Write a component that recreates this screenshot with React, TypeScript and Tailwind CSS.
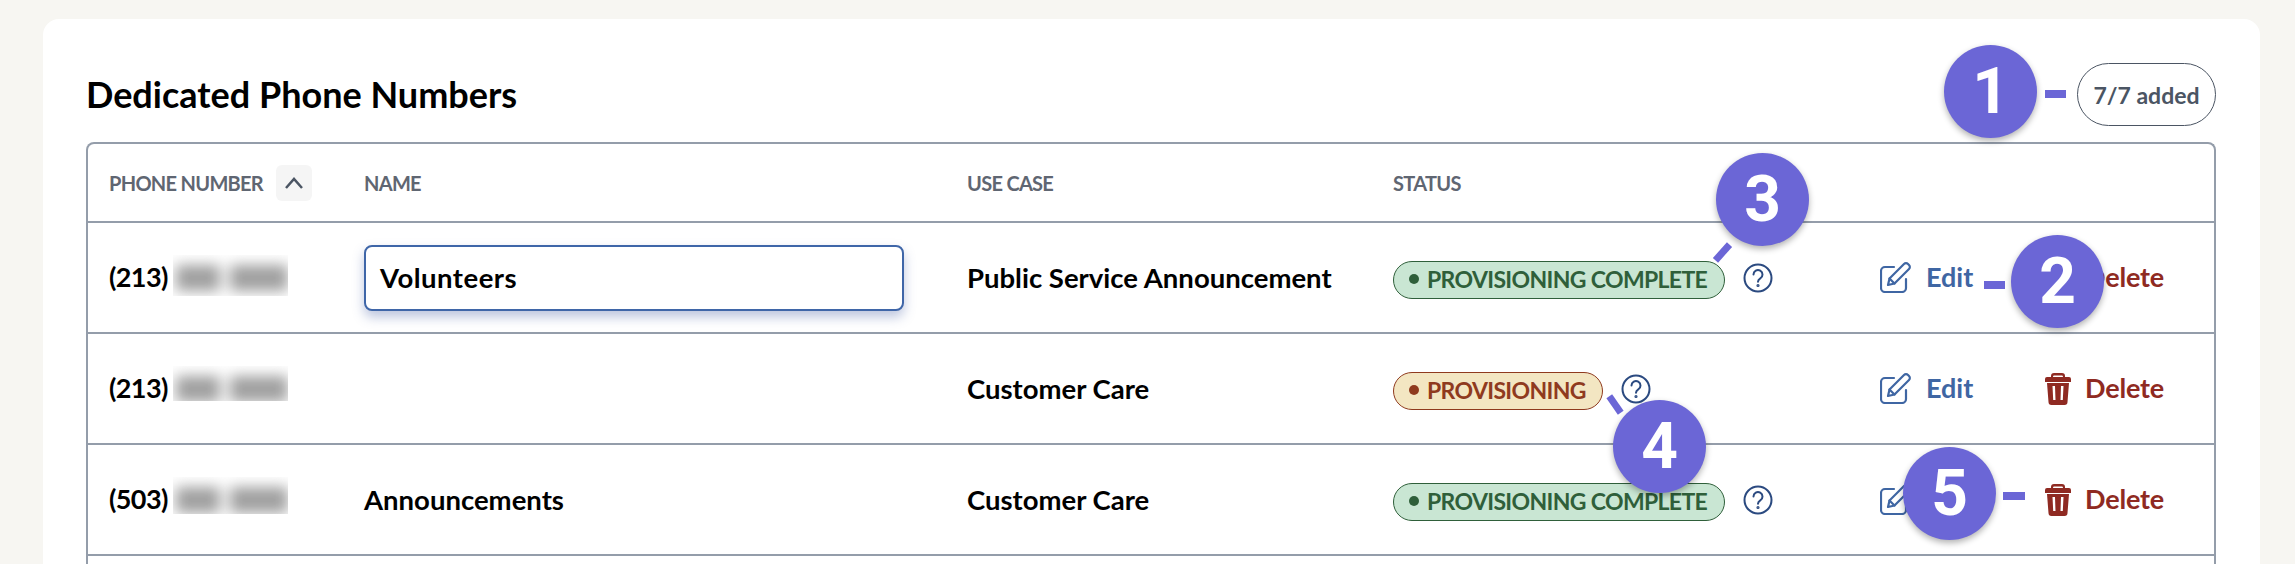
import React from "react";

const font = { fontFamily: '"Lato", "Noto Sans", sans-serif' };

function Blur({ clip }: { clip: string }) {
  return (
    <div className={`w-[115px] overflow-hidden ${clip}`}>
      <div className="flex h-[46px] items-center gap-[10px] pl-[3px] blur-[7px]">
        <div className="h-[26px] w-[46px] bg-[#a0a0a0]" />
        <div className="h-[26px] w-[60px] bg-[#a0a0a0]" />
      </div>
    </div>
  );
}

function Badge({ done }: { done: boolean }) {
  return done ? (
    <span className="mt-[4px] inline-flex h-[38px] w-[332px] items-center rounded-[19px] border border-[#2f5f3a] bg-[#c9e6d3] pl-[15px] text-[23px] font-bold tracking-[-0.65px] text-[#2f5f3a]">
      <span className="mb-[2px] mr-[8px] h-[10px] w-[10px] rounded-full bg-[#2f5f3a]" />
      PROVISIONING COMPLETE
    </span>
  ) : (
    <span className="mt-[4px] inline-flex h-[38px] w-[210px] items-center rounded-[19px] border border-[#8f3a1e] bg-[#f3e6c2] pl-[15px] text-[23px] font-bold tracking-[-0.65px] text-[#8f3a1e]">
      <span className="mb-[2px] mr-[8px] h-[10px] w-[10px] rounded-full bg-[#8f3a1e]" />
      PROVISIONING
    </span>
  );
}

function Help() {
  return (
    <svg width="30" height="30" viewBox="0 0 30 30" fill="none" stroke="#2b4a80" strokeWidth="2" strokeLinecap="round">
      <circle cx="15" cy="15" r="13.5" />
      <path d="M10.500 11.500a4.500 4.500 0 1 1 6.800 3.900c-1.500.9-2.300 1.700-2.300 3.400" />
      <circle cx="15" cy="22.500" r="0.600" fill="#2b4a80" />
    </svg>
  );
}

function EditIcon() {
  return (
    <svg width="31" height="31" viewBox="0 0 31 31" fill="none" stroke="#3f66a3" strokeWidth="2.200" strokeLinejoin="round" strokeLinecap="round">
      <path d="M14 5H5a4 4 0 0 0-4 4v17a4 4 0 0 0 4 4h17a4 4 0 0 0 4-4V17" />
      <path d="M8 23l1.500-6.500L24 2a2.800 2.800 0 0 1 4 0l1 1a2.800 2.800 0 0 1 0 4L14.500 21.500z" />
      <path d="M9.500 16.500l5 5" />
    </svg>
  );
}

function TrashIcon() {
  return (
    <svg width="26" height="32" viewBox="0 0 26 32" fill="#8f2a22">
      <path fillRule="evenodd" d="M9 0h8a3 3 0 0 1 3 3v1h4a2 2 0 0 1 2 2v3H0V6a2 2 0 0 1 2-2h4V3a3 3 0 0 1 3-3zm0 2.500a1 1 0 0 0-.8 1.500h9.600a1 1 0 0 0-.8-1.500z" />
      <path fillRule="evenodd" d="M2 10h22l-1.500 19a3 3 0 0 1-3 3h-13a3 3 0 0 1-3-3zM7.500 13l.7 14h2.300L10 13zm8.500 0l-.5 14h2.300l.7-14z" />
    </svg>
  );
}

function Actions() {
  return (
    <div className="flex items-center">
      <EditIcon />
      <span className="ml-[15px] w-[119px] text-[27px] font-bold text-[#3f66a3]">Edit</span>
      <TrashIcon />
      <span className="ml-[14px] text-[27px] font-bold tracking-[-0.2px] text-[#8f2a22]">Delete</span>
    </div>
  );
}

function Row({ code, name, input, useCase, done, clip }: { code: string; name?: string; input?: string; useCase: string; done: boolean; clip: string }) {
  return (
    <div className="grid h-[111px] grid-cols-[255px_603px_426px_487px_1fr] items-center border-b-2 border-[#949daa] pl-[21px]">
      <div className="flex items-center text-[27px] font-bold tracking-[-0.6px] text-black">
        <span className="w-[64px]">{code}</span>
        <Blur clip={clip} />
      </div>
      <div>
        {input ? (
          <div className="flex h-[66px] w-[540px] items-center rounded-[8px] border-2 border-[#3f66a8] bg-white pl-[14px] text-[27.500px] font-bold tracking-[0.5px] text-black shadow-[0_6px_12px_rgba(63,90,160,0.35)]">
            {input}
          </div>
        ) : (
          <span className="text-[27.500px] font-bold text-black">{name}</span>
        )}
      </div>
      <div className="text-[27.500px] font-bold text-black">{useCase}</div>
      <div className="flex items-center gap-[18px]">
        <Badge done={done} />
        <Help />
      </div>
      <Actions />
    </div>
  );
}

function Callout({ n, className }: { n: string; className: string }) {
  return (
    <div className={`absolute flex h-[93px] w-[93px] items-center justify-center rounded-full bg-[#6b66d6] text-[64px] font-bold text-white shadow-[0_3px_6px_rgba(0,0,0,0.3)] ${className}`} style={{ fontFamily: '"Roboto", "Liberation Sans", sans-serif' }}>
      {n}
    </div>
  );
}

export default function App() {
  return (
    <div className="relative h-[564px] w-full overflow-hidden bg-[#f7f6f2] pl-[43px] pt-[19px]" style={font}>
      <div className="h-[600px] w-[2217px] rounded-t-[16px] bg-white px-[44px]">
        <div className="flex h-[123px] items-end justify-between pb-[16px]">
          <h1 className="-ml-px pb-[10px] text-[36px] font-bold leading-[44px] text-black">Dedicated Phone Numbers</h1>
          <span className="flex h-[63px] w-[139px] items-center justify-center rounded-full border border-[#4b5563] pt-[2px] text-[23px] font-bold text-[#4b5563]">7/7 added</span>
        </div>
        <div className="-ml-px h-[500px] rounded-t-[8px] border-x-2 border-t-2 border-[#949daa]">
          <div className="grid h-[79px] grid-cols-[255px_603px_426px_487px_1fr] items-center border-b-2 border-[#949daa] pl-[21px] text-[20px] font-bold tracking-[-0.7px] text-[#5f6672]">
            <div className="flex items-center">
              <span className="w-[167px]">PHONE NUMBER</span>
              <span className="flex h-[36px] w-[36px] items-center justify-center rounded-[6px] bg-[#f5f5f5]">
                <svg width="22" height="14" viewBox="0 0 22 14" fill="none" stroke="#4b5563" strokeWidth="2.500"><path d="M3 12l8-9 8 9" /></svg>
              </span>
            </div>
            <div>NAME</div>
            <div>USE CASE</div>
            <div>STATUS</div>
            <div />
          </div>
          <Row code="(213)" input="Volunteers" useCase="Public Service Announcement" done clip="h-[41px] mb-[5px]" />
          <Row code="(213)" useCase="Customer Care" done={false} clip="h-[35px] mb-[11px]" />
          <Row code="(503)" name="Announcements" useCase="Customer Care" done clip="h-[37px] mb-[9px]" />
        </div>
      </div>

      <div className="absolute left-[2045px] top-[90px] h-[8px] w-[21px] bg-[#6b66d6]" />
      <div className="absolute left-[1984px] top-[281px] h-[8px] w-[21px] bg-[#6b66d6]" />
      <div className="absolute left-[2003px] top-[492px] h-[8px] w-[22px] bg-[#6b66d6]" />
      <div className="absolute left-[1712px] top-[249px] h-[7px] w-[21px] rotate-[-48deg] bg-[#6b66d6]" />
      <div className="absolute left-[1605px] top-[401px] h-[7px] w-[20px] rotate-[55deg] bg-[#6b66d6]" />

      <Callout n="1" className="left-[1944px] top-[45px]" />
      <Callout n="2" className="left-[2011px] top-[235px]" />
      <Callout n="3" className="left-[1716px] top-[153px]" />
      <Callout n="4" className="left-[1613px] top-[400px]" />
      <Callout n="5" className="left-[1903px] top-[447px]" />
    </div>
  );
}
